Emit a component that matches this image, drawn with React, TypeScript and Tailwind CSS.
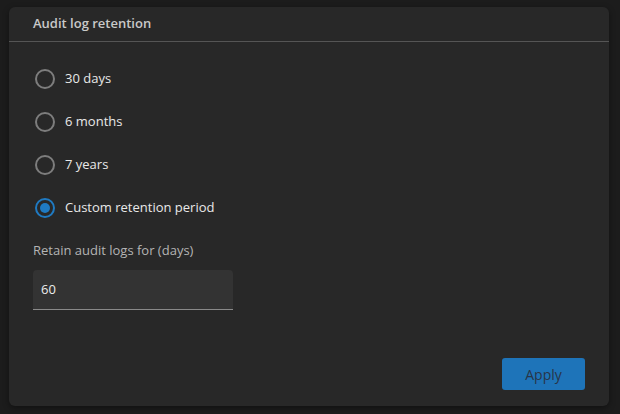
import { useState } from "react";

const options = [
  { id: "30d", label: "30 days" },
  { id: "6m", label: "6 months" },
  { id: "7y", label: "7 years" },
  { id: "custom", label: "Custom retention period" },
];

function Radio({ checked }: { checked: boolean }) {
  return (
    <span
      className={`flex h-5 w-5 shrink-0 items-center justify-center rounded-full border-2 ${
        checked ? "border-[#1f7ac2]" : "border-[#7d7d7d]"
      }`}
    >
      {checked && <span className="h-[10px] w-[10px] rounded-full bg-[#1f7ac2]" />}
    </span>
  );
}

export default function App() {
  const [selected, setSelected] = useState("custom");
  const [days, setDays] = useState("60");

  return (
    <div className="h-[414px] w-[620px] bg-[#1c1c1c] px-[9px] pt-[7px] pb-2 font-['Open_Sans',sans-serif]">
      <div className="flex h-[399px] w-[600px] flex-col rounded-md bg-[#282828] shadow-[0_2px_6px_rgba(0,0,0,0.4)]">
        <div className="flex h-[35px] items-center border-b border-[#555] px-6">
          <h2 className="text-[13px] font-semibold text-[#c9c9c9]">Audit log retention</h2>
        </div>

        <div className="flex flex-1 flex-col px-6 pt-[27px]">
          <div className="flex flex-col gap-[23px]">
            {options.map((o) => (
              <label
                key={o.id}
                className="flex h-5 cursor-pointer items-center gap-[10px] pl-[2px]"
                onClick={() => setSelected(o.id)}
              >
                <Radio checked={selected === o.id} />
                <span className="text-[13px] text-[#e8e8e8]">{o.label}</span>
              </label>
            ))}
          </div>

          <div className="mt-[23px] text-[13px] text-[#b4b4b4]">Retain audit logs for (days)</div>
          <input
            value={days}
            onChange={(e) => setDays(e.target.value)}
            className="mt-[9px] h-10 w-[200px] rounded-t-[4px] border-b border-[#8a8a8a] bg-[#333333] px-2 text-[13px] text-[#ececec] outline-none"
          />

          <div className="mt-auto flex justify-end pb-4">
            <button className="h-8 w-[83px] rounded-[3px] bg-[#1e74b9] text-[14px] font-medium text-[#283548]">
              Apply
            </button>
          </div>
        </div>
      </div>
    </div>
  );
}
